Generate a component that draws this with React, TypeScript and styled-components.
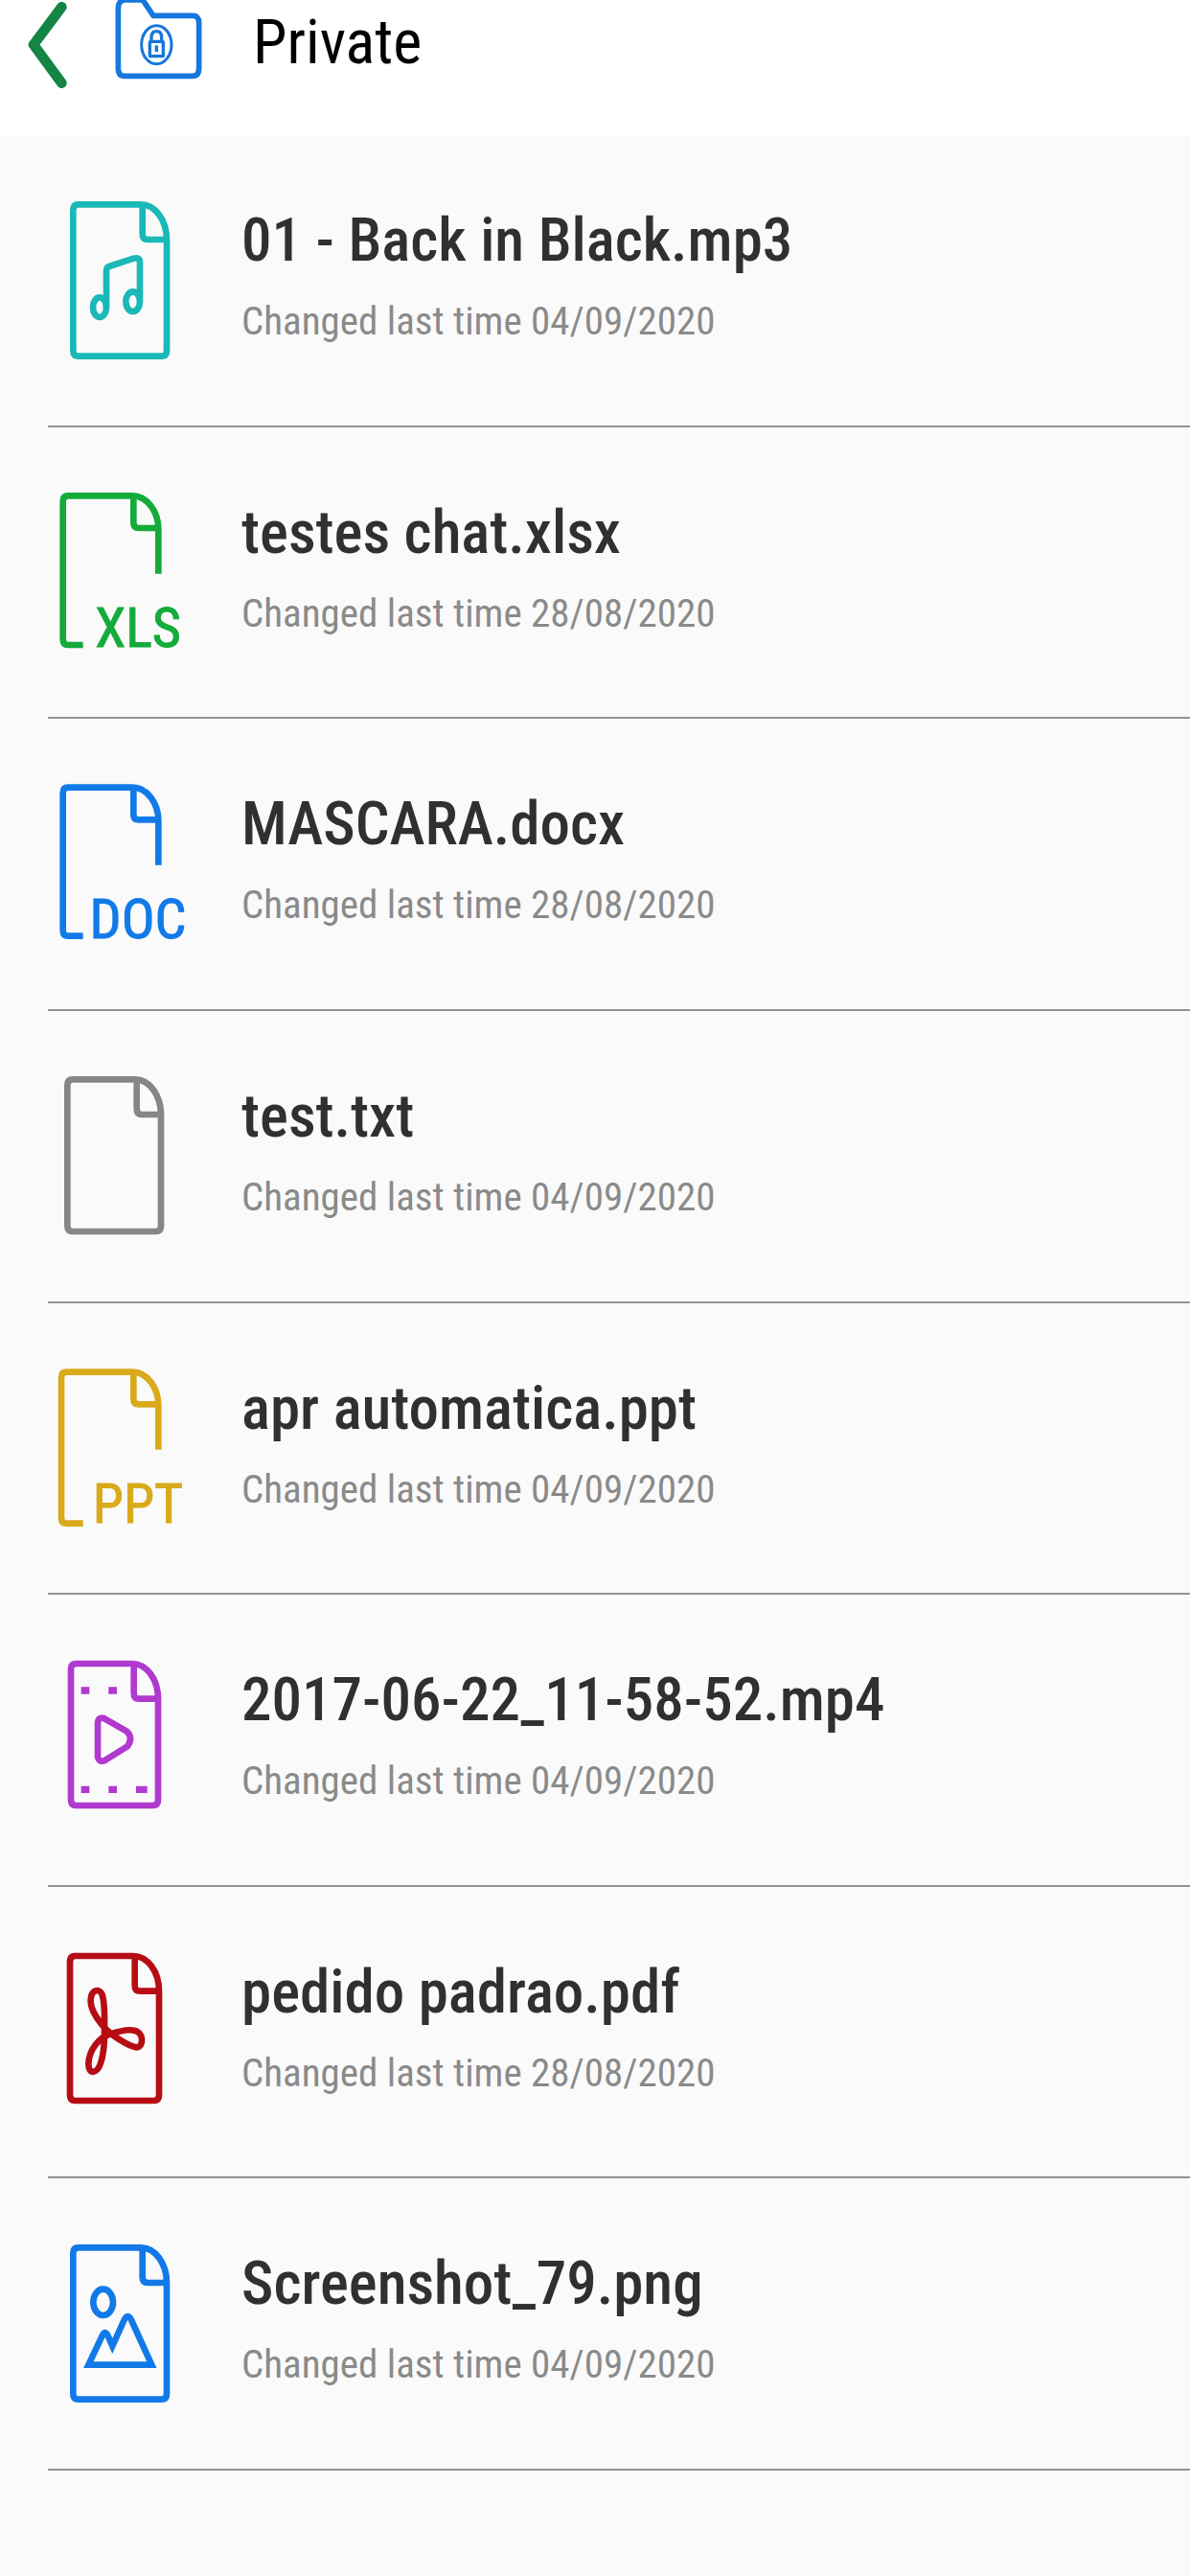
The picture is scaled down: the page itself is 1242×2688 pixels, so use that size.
import React from "react";
import styled, { createGlobalStyle } from "styled-components";

const fontStack = '"Roboto Condensed", Roboto, "Liberation Sans", sans-serif';

const GlobalStyle = createGlobalStyle`
  *, *::before, *::after { box-sizing: border-box; }
  body { margin: 0; background: #fafafa; font-family: ${fontStack}; }
`;

const Page = styled.div`
  display: flex;
  flex-direction: column;
  min-height: 100vh;
  background: #fafafa;
`;

const Header = styled.header`
  display: flex;
  align-items: flex-start;
  gap: 46px;
  height: 141px;
  padding: 0 26px;
  background: #ffffff;
`;

const BackButton = styled.button`
  display: block;
  flex: none;
  padding: 0;
  border: 0;
  background: none;
  cursor: pointer;
  svg { display: block; }
`;

const FolderIcon = styled.svg`
  display: block;
  flex: none;
`;

const Heading = styled.h1`
  margin: 0;
  padding-top: 3px;
  font-size: 64px;
  line-height: 84px;
  font-weight: 400;
  color: #000000;
`;

const FileList = styled.ul`
  flex: 1;
  display: grid;
  grid-auto-rows: 1fr;
  margin: 0;
  padding: 0 0 110px 50px;
  list-style: none;
`;

const FileRow = styled.li`
  display: flex;
  min-height: 300px;
  gap: 52px;
  border-bottom: 2px solid #929292;
`;

const FileIcon = styled.svg`
  display: block;
  flex: none;
  width: 150px;
  height: 200px;
  margin-top: 49px;
`;

const IconLabel = styled.text`
  font-family: ${fontStack};
  font-size: 174px;
  font-weight: 400;
`;

const FileText = styled.div`
  display: flex;
  flex-direction: column;
  gap: 14px;
  min-width: 0;
  padding-top: 70px;
`;

const FileName = styled.h2`
  margin: 0;
  font-size: 63px;
  line-height: 80px;
  font-weight: 500;
  color: #303030;
`;

const FileDate = styled.p`
  margin: 0;
  font-size: 41px;
  line-height: 60px;
  color: #8a8a8a;
`;

type Kind = "audio" | "sheet" | "doc" | "text" | "slides" | "video" | "pdf" | "image";

interface FileEntry {
  name: string;
  date: string;
  kind: Kind;
}

const files: FileEntry[] = [
  { name: "01 - Back in Black.mp3", date: "04/09/2020", kind: "audio" },
  { name: "testes chat.xlsx", date: "28/08/2020", kind: "sheet" },
  { name: "MASCARA.docx", date: "28/08/2020", kind: "doc" },
  { name: "test.txt", date: "04/09/2020", kind: "text" },
  { name: "apr automatica.ppt", date: "04/09/2020", kind: "slides" },
  { name: "2017-06-22_11-58-52.mp4", date: "04/09/2020", kind: "video" },
  { name: "pedido padrao.pdf", date: "28/08/2020", kind: "pdf" },
  { name: "Screenshot_79.png", date: "04/09/2020", kind: "image" },
];

const colors: Record<Kind, string> = {
  audio: "#1bb8b8",
  sheet: "#14ab3a",
  doc: "#127ae8",
  text: "#868686",
  slides: "#d9aa1c",
  video: "#b039cf",
  pdf: "#b60d14",
  image: "#127ae8",
};

/* A sheet of paper with a folded, rounded corner at the top right. */
const Sheet = ({ l, r, t, b }: { l: number; r: number; t: number; b: number }) => (
  <>
    <path d={`M${l + 16} ${t}H${r - 82}C${r - 35} ${t} ${r} ${t + 50} ${r} ${t + 110}V${b - 18}Q${r} ${b} ${r - 16} ${b}H${l + 16}Q${l} ${b} ${l} ${b - 18}V${t + 18}Q${l} ${t} ${l + 16} ${t}Z`} />
    <path d={`M${r - 76} ${t + 4}V${t + 92}Q${r - 76} ${t + 110} ${r - 60} ${t + 110}H${r}`} />
  </>
);

/* The same sheet, left open at the lower right for the file type. */
const LabelledSheet = ({ l, t, b, label }: { l: number; t: number; b: number; label: string }) => (
  <>
    <path d={`M140 ${b}H${l + 16}Q${l} ${b} ${l} ${b - 18}V${t + 18}Q${l} ${t} ${l + 16} ${t}H294C341 ${t} 376 ${t + 50} 376 ${t + 104}V311`} />
    <path d={`M298 ${t + 4}V${t + 84}Q298 ${t + 101} 314 ${t + 101}H376`} />
    <IconLabel x="312" y="541" textAnchor="middle" fill="currentColor" stroke="currentColor" strokeWidth="3">{label}</IconLabel>
  </>
);

const drawings: Record<Kind, React.ReactNode> = {
  audio: (
    <>
      <Sheet l={109} r={402} t={70} b={545} />
      <path d="M213 392V278Q213 267 222 264L298 239Q318 234 318 252V372" />
      <ellipse cx="192" cy="392" rx="21" ry="31" />
      <ellipse cx="296" cy="374" rx="22" ry="31" />
    </>
  ),
  sheet: <LabelledSheet l={77} t={67} b={534} label="XLS" />,
  doc: <LabelledSheet l={77} t={68} b={533} label="DOC" />,
  text: <Sheet l={91} r={384} t={67} b={543} />,
  slides: <LabelledSheet l={72} t={68} b={542} label="PPT" />,
  video: (
    <>
      <Sheet l={102} r={375} t={69} b={513} />
      <path d="M186 256Q187 234 206 240L277 281Q298 302 279 328L210 371Q190 381 186 360Z" />
      <path d="M134 153H160M220 153H246M134 463H160M220 463H246M306 463H341" strokeWidth="22" />
    </>
  ),
  pdf: (
    <>
      <Sheet l={99} r={378} t={69} b={522} />
      <path d="M207 312C207 262 210 222 200 190C191 168 165 174 164 207C163 237 184 267 207 293C225 315 283 352 307 355C332 354 330 307 300 302C277 297 242 308 224 314C193 322 158 362 157 407C157 441 183 439 195 405C206 374 207 340 207 312Z" />
    </>
  ),
  image: (
    <>
      <Sheet l={109} r={402} t={70} b={545} />
      <ellipse cx="203" cy="241" rx="31" ry="41" />
      <path d="M157 437L201 344Q209 328 217 344L232 378L270 294Q280 276 290 294L355 437Z" />
    </>
  ),
};

const App = () => (
  <Page>
    <GlobalStyle />
    <Header>
      <BackButton type="button" aria-label="Back">
        <svg width="48" height="96" viewBox="78 0 144 288" fill="none" stroke="#148545" strokeWidth="32" strokeLinecap="round" strokeLinejoin="round" aria-hidden="true">
          <path d="M193 22L105 140L193 260" />
        </svg>
      </BackButton>
      <FolderIcon width="98" height="90" viewBox="360 0 294 270" fill="none" stroke="#1677dc" strokeWidth="17" strokeLinejoin="round" aria-hidden="true">
        <path d="M370 28Q370 2 390 0H440Q448 0 454 10L480 49H605Q623 50 623 72V212Q623 238 603 238H390Q370 238 370 212Z" />
        <ellipse cx="490" cy="140" rx="47" ry="60" strokeWidth="9" />
        <path d="M474 128V118Q474 98 490 98Q506 98 506 118V128" strokeWidth="10" />
        <rect x="469" y="130" width="42" height="46" rx="3" strokeWidth="10" />
        <path d="M490 142V162" strokeWidth="10" />
      </FolderIcon>
      <Heading>Private</Heading>
    </Header>
    <FileList>
      {files.map((file) => (
        <FileRow key={file.name}>
          <FileIcon viewBox="30 0 450 600" fill="none" stroke="currentColor" strokeWidth="20" color={colors[file.kind]} aria-hidden="true">
            {drawings[file.kind]}
          </FileIcon>
          <FileText>
            <FileName>{file.name}</FileName>
            <FileDate>Changed last time {file.date}</FileDate>
          </FileText>
        </FileRow>
      ))}
    </FileList>
  </Page>
);

export default App;
